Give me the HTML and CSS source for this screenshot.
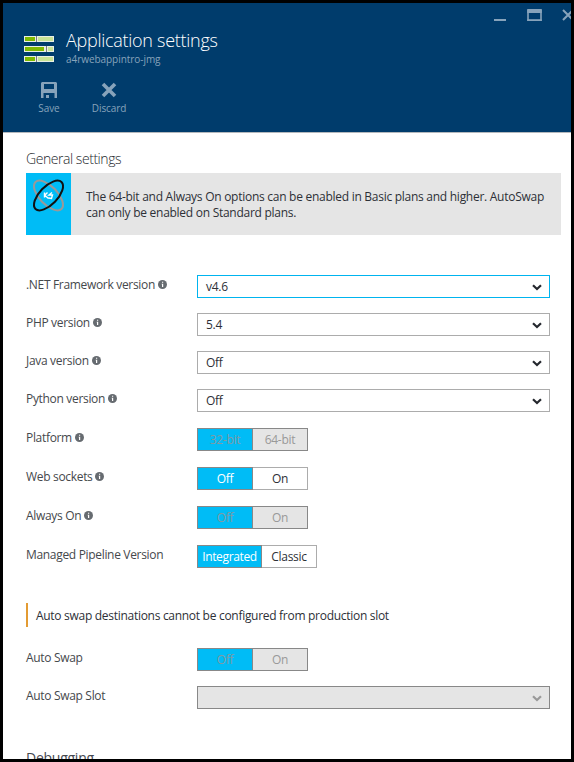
FILE: index.html
```html
<!DOCTYPE html>
<html lang="en">
<head>
<meta charset="utf-8">
<title>Application settings</title>
<link rel="stylesheet" href="styles.css">
</head>
<body>
<svg width="0" height="0" class="defs">
  <symbol id="info" viewBox="0 0 9 9"><circle cx="4.5" cy="4.5" r="4.5" fill="#666b70"/><path d="M4 1.8h1.2v1H4zM3.7 3.7h1.5v3.3H4v-2.6h-.3z" fill="#fff"/></symbol>
  <symbol id="chev" viewBox="0 0 10 7"><path d="M1 1.2l4 3.8 4-3.8" fill="none" stroke="currentColor" stroke-width="2.2"/></symbol>
</svg>
<div class="blade">
  <header class="head">
    <div class="window">
      <svg width="77" height="14" viewBox="0 0 77 14" fill="none" stroke="#87a3bb"><path d="M0 11h12" stroke-width="2"/><path d="M34 1v10.2h13V1" stroke-width="1.6"/><path d="M33.2 2h14.6" stroke-width="4"/><path d="M33.2 11.2h14.6" stroke-width="1.6"/><path d="M69 1l10 10M69 11L79 1" stroke-width="2"/></svg>
    </div>
    <div class="brand">
      <svg class="logo" width="30" height="26" viewBox="0 0 30 26" shape-rendering="crispEdges">
        <path d="M0 0h30v6H0zM0 10h30v6H0zM0 20h30v6H0z" fill="#e9efe4"/>
        <path d="M14 1h15v4H14zM24 11h5v4h-5zM14 21h15v4H14z" fill="#c8e396"/>
        <path d="M1 1h10v4H1zM1 11h19v4H1zM1 21h10v4H1z" fill="#7fba00"/>
        <path d="M12 0h1v6h-1zM22 10h1v6h-1zM12 20h1v6h-1z" fill="#7a7a7a"/>
      </svg>
      <div><h1>Application settings</h1><p>a4rwebappintro-jmg</p></div>
    </div>
    <nav class="commands">
      <a class="save"><svg width="16" height="16" viewBox="0 0 16 16"><path fill="#87a3bb" fill-rule="evenodd" d="M1 0h14l1 1v15h-2.5v-5h-11v5H0V1zM3 2v5h10V2zM5 13h3v3H5z"/></svg><span>Save</span></a>
      <a class="discard"><svg width="16" height="16" viewBox="0 0 16 16"><path d="M2 2l12 12M14 2L2 14" stroke="#87a3bb" stroke-width="3.6"/></svg><span>Discard</span></a>
    </nav>
  </header>
  <main>
    <h2 class="general">General settings</h2>
    <div class="notice">
      <div class="tile"><svg width="34" height="34" viewBox="0 0 34 34" fill="none" stroke-width="2"><ellipse cx="17.5" cy="17.5" rx="18.7" ry="9" transform="rotate(46 17.5 17.5)" stroke="#999"/><ellipse cx="17.5" cy="17.5" rx="18.7" ry="9" transform="rotate(-46 17.5 17.5)" stroke="#111"/><path d="M13.5 14.5v5M13.5 17.5l3-3M14 17.5l3.5 3M21 14.5l-3 2.5h3.5l-1 3.5-3-.5" stroke="#fff" stroke-width="1.4"/></svg></div>
      <p>The 64-bit and Always On options can be enabled in Basic plans and higher. AutoSwap<br>can only be enabled on Standard plans.</p>
    </div>
    <section class="selects">
      <div class="row"><label><span>.NET Framework version</span><svg class="i"><use href="#info"/></svg></label><div class="select focus">v4.6<svg class="c"><use href="#chev"/></svg></div></div>
      <div class="row"><label><span>PHP version</span><svg class="i"><use href="#info"/></svg></label><div class="select">5.4<svg class="c"><use href="#chev"/></svg></div></div>
      <div class="row"><label><span>Java version</span><svg class="i"><use href="#info"/></svg></label><div class="select">Off<svg class="c"><use href="#chev"/></svg></div></div>
      <div class="row"><label><span>Python version</span><svg class="i"><use href="#info"/></svg></label><div class="select">Off<svg class="c"><use href="#chev"/></svg></div></div>
    </section>
    <section class="toggles">
      <div class="row"><label><span>Platform</span><svg class="i"><use href="#info"/></svg></label><div class="toggle disabled"><b>32-bit</b><i>64-bit</i></div></div>
      <div class="row"><label><span>Web sockets</span><svg class="i"><use href="#info"/></svg></label><div class="toggle"><b>Off</b><i>On</i></div></div>
      <div class="row"><label><span>Always On</span><svg class="i"><use href="#info"/></svg></label><div class="toggle disabled"><b>Off</b><i>On</i></div></div>
      <div class="row"><label><span>Managed Pipeline Version</span></label><div class="toggle wide"><b>Integrated</b><i>Classic</i></div></div>
    </section>
    <p class="warning">Auto swap destinations cannot be configured from production slot</p>
    <section class="swap">
      <div class="row"><label><span>Auto Swap</span></label><div class="toggle disabled"><b>Off</b><i>On</i></div></div>
      <div class="row"><label><span>Auto Swap Slot</span></label><div class="select off"><svg class="c"><use href="#chev"/></svg></div></div>
    </section>
    <h2 class="debug">Debugging</h2>
  </main>
</div>
</body>
</html>
```
FILE: styles.css
```css
* { box-sizing: border-box; margin: 0; padding: 0; }
html, body { height: 762px; overflow: hidden; }
body { font: 12px/16px "Open Sans", "Noto Sans", sans-serif; color: #2d3037; letter-spacing: -0.27px; }
.defs { position: absolute; }
.blade { width: 574px; height: 762px; border: 3px solid #000; background: #fff; overflow: hidden; }
.head { height: 130px; background: #003c6c; border-bottom: 1px solid #b4b8bc; color: #87a3bb; }
.window { height: 27px; padding-top: 6px; display: flex; justify-content: flex-end; }
.window svg { display: block; }
.brand { display: flex; height: 45px; padding-left: 21px; }
.logo { margin: 6px 12px 0 0; }
h1 { font-size: 18px; line-height: 22px; font-weight: 300; color: #fff; margin-top: -1px; letter-spacing: -0.28px; white-space: nowrap; }
.brand p { font-size: 10px; line-height: 14px; margin-top: 1px; letter-spacing: -0.05px; }
.commands { display: flex; padding-left: 16px; }
.commands a { width: 60px; display: flex; flex-direction: column; align-items: center; font-size: 10px; line-height: 14px; padding-top: 7px; letter-spacing: -0.1px; }
.commands span { margin-top: 3px; }
main { padding: 17px 10px 0 23px; }
h2 { font-size: 13px; line-height: 18px; font-weight: 400; color: #45484f; }
.general { font-size: 14px; font-weight: 300; letter-spacing: -0.45px; color: #25282e; }
.notice { height: 62px; display: flex; background: #e5e5e5; margin-top: 5px; }
.tile { width: 45px; background: #00bcf6; padding: 5px; }
.tile svg { display: block; overflow: visible; }
.notice p { padding: 16px 0 0 15px; white-space: nowrap; }
.selects { margin-top: 40px; display: grid; gap: 15px; }
.toggles { margin-top: 16px; display: grid; gap: 16px; }
.row { height: 23px; display: flex; }
label { width: 171px; display: flex; line-height: 20px; color: #45484c; white-space: nowrap; letter-spacing: -0.32px; }
.i { width: 9px; height: 9px; margin: 5px 0 0 3px; }
.select { width: 353px; height: 23px; border: 1px solid #acacac; padding: 0 7px 0 8px; line-height: 22px; display: flex; justify-content: space-between; }
.focus { border-color: #00b4ef; }
.c { width: 10px; height: 7px; margin-top: 8px; margin-left: auto; color: #25282e; }
.toggle { width: 111px; height: 23px; display: flex; border: 1px solid #acacac; line-height: 21px; }
.toggle b, .toggle i { flex: 1; font-weight: 400; font-style: normal; text-align: center; }
.toggle b { background: #00bcf6; color: #fff; border: 1px solid #888; margin: -1px 0 -1px -1px; flex: 0 0 56px; }
.wide { width: 120px; }
.toggle.wide b { flex-basis: 65px; letter-spacing: -0.35px; }
.disabled, .off { background: #e5e5e5; border-color: #888; color: #999; }
.disabled b { color: #7f9aa4; }
.off .c { color: #999; }
.warning { margin-top: 35px; height: 24px; border-left: 2px solid #e39b33; padding-left: 8px; line-height: 26px; letter-spacing: -0.29px; }
.swap { margin-top: 21px; display: grid; gap: 15px; }
.debug { margin-top: 40px; font-size: 14px; letter-spacing: -0.25px; }
```
